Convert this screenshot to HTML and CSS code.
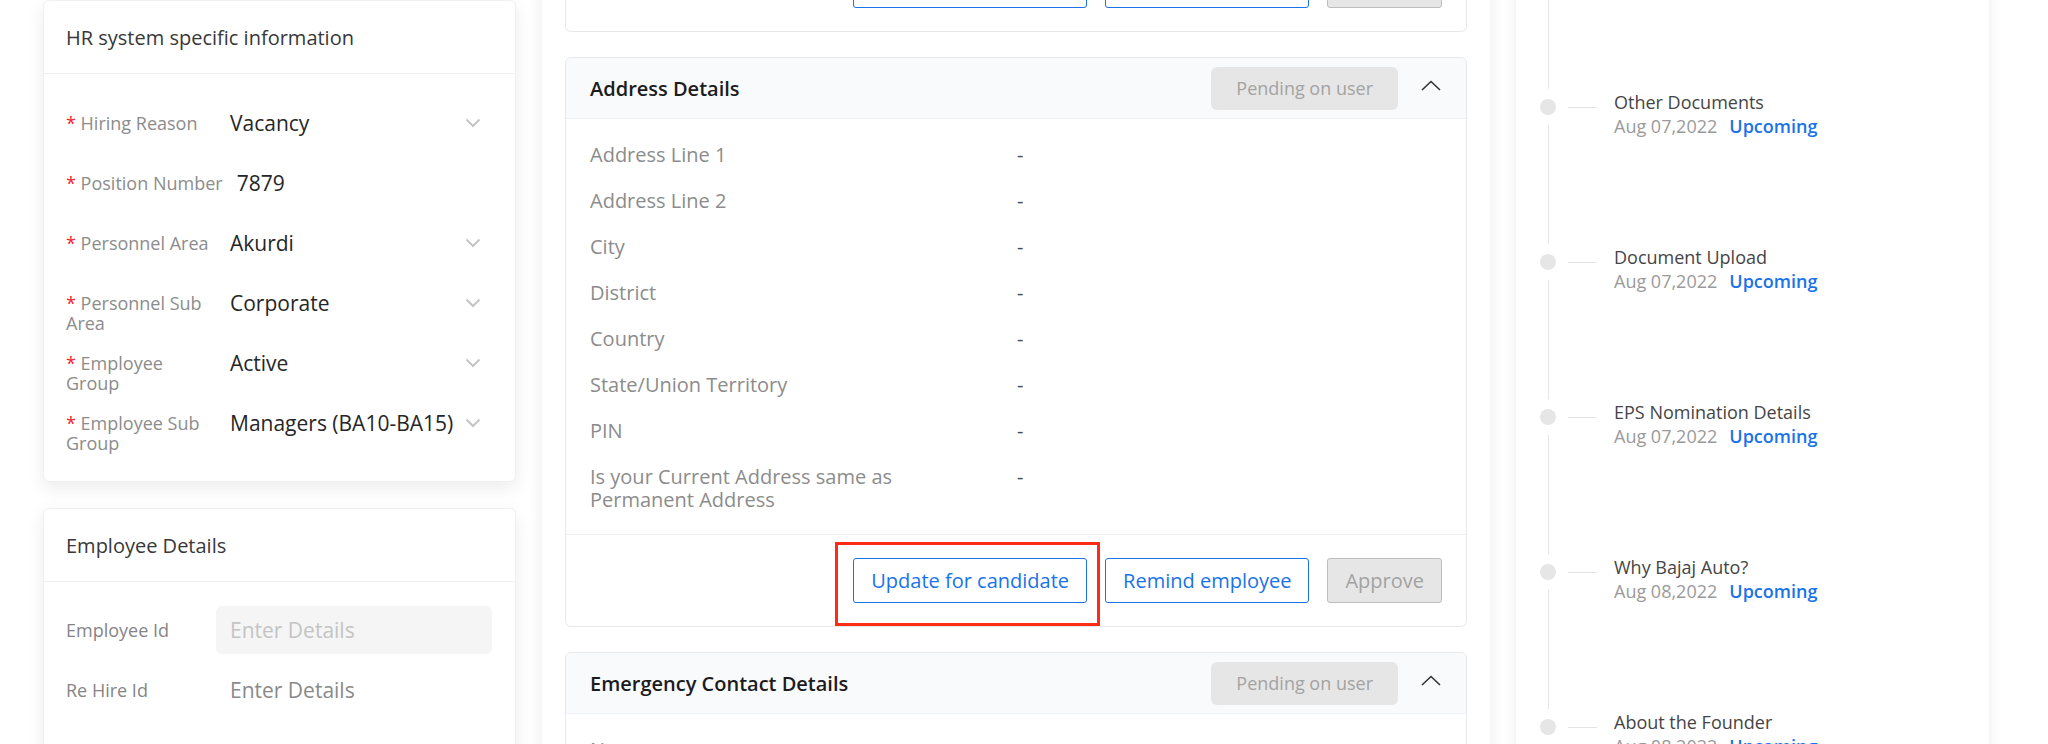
FILE: index.html
```html
<!DOCTYPE html>
<html lang="en">
<head>
<meta charset="utf-8">
<title>Onboarding</title>
<link rel="stylesheet" href="styles.css">
</head>
<body>
<div class="left-col">
  <section class="card">
    <header class="card-head">HR system specific information</header>
    <div class="form">
      <div class="frow">
        <div class="flabel"><span class="req">*</span> Hiring Reason</div>
        <div class="select"><span>Vacancy</span><svg class="chev" width="16" height="10" viewBox="0 0 16 10"><polyline points="1.5,1.5 8,8 14.5,1.5" fill="none" stroke="#c4c4c4" stroke-width="2"/></svg></div>
      </div>
      <div class="frow">
        <div class="flabel wide"><span class="req">*</span> Position Number</div>
        <div class="select"><span>7879</span></div>
      </div>
      <div class="frow">
        <div class="flabel"><span class="req">*</span> Personnel Area</div>
        <div class="select"><span>Akurdi</span><svg class="chev" width="16" height="10" viewBox="0 0 16 10"><polyline points="1.5,1.5 8,8 14.5,1.5" fill="none" stroke="#c4c4c4" stroke-width="2"/></svg></div>
      </div>
      <div class="frow">
        <div class="flabel"><span class="req">*</span> Personnel Sub Area</div>
        <div class="select"><span>Corporate</span><svg class="chev" width="16" height="10" viewBox="0 0 16 10"><polyline points="1.5,1.5 8,8 14.5,1.5" fill="none" stroke="#c4c4c4" stroke-width="2"/></svg></div>
      </div>
      <div class="frow">
        <div class="flabel"><span class="req">*</span> Employee Group</div>
        <div class="select"><span>Active</span><svg class="chev" width="16" height="10" viewBox="0 0 16 10"><polyline points="1.5,1.5 8,8 14.5,1.5" fill="none" stroke="#c4c4c4" stroke-width="2"/></svg></div>
      </div>
      <div class="frow">
        <div class="flabel"><span class="req">*</span> Employee Sub Group</div>
        <div class="select"><span>Managers (BA10-BA15)</span><svg class="chev" width="16" height="10" viewBox="0 0 16 10"><polyline points="1.5,1.5 8,8 14.5,1.5" fill="none" stroke="#c4c4c4" stroke-width="2"/></svg></div>
      </div>
    </div>
  </section>
  <section class="card">
    <header class="card-head">Employee Details</header>
    <div class="eform">
      <div class="erow">
        <div class="elabel">Employee Id</div>
        <div class="einput disabled">Enter Details</div>
      </div>
      <div class="erow">
        <div class="elabel">Re Hire Id</div>
        <div class="einput">Enter Details</div>
      </div>
    </div>
  </section>
</div>

<main class="mid">
  <section class="dcard">
    <div class="dfoot first">
      <button class="btn">Update for candidate</button>
      <button class="btn">Remind employee</button>
      <button class="btn btn-gray">Approve</button>
    </div>
  </section>

  <section class="dcard">
    <div class="dhead">
      <h2 class="dtitle">Address Details</h2>
      <span class="badge">Pending on user</span>
      <svg class="up" width="20" height="11" viewBox="0 0 20 11"><polyline points="1,10 10,1.5 19,10" fill="none" stroke="#333" stroke-width="1.6"/></svg>
    </div>
    <div class="dbody">
      <div class="dl">Address Line 1</div><div class="dv">-</div>
      <div class="dl">Address Line 2</div><div class="dv">-</div>
      <div class="dl">City</div><div class="dv">-</div>
      <div class="dl">District</div><div class="dv">-</div>
      <div class="dl">Country</div><div class="dv">-</div>
      <div class="dl">State/Union Territory</div><div class="dv">-</div>
      <div class="dl">PIN</div><div class="dv">-</div>
      <div class="dl narrow">Is your Current Address same as Permanent Address</div><div class="dv">-</div>
    </div>
    <div class="dfoot">
      <span class="hl-wrap"><button class="btn">Update for candidate</button><span class="hl"></span></span>
      <button class="btn">Remind employee</button>
      <button class="btn btn-gray">Approve</button>
    </div>
  </section>

  <section class="dcard">
    <div class="dhead">
      <h2 class="dtitle">Emergency Contact Details</h2>
      <span class="badge">Pending on user</span>
      <svg class="up" width="20" height="11" viewBox="0 0 20 11"><polyline points="1,10 10,1.5 19,10" fill="none" stroke="#333" stroke-width="1.6"/></svg>
    </div>
    <div class="dbody">
      <div class="dl">Name</div><div class="dv">-</div>
      <div class="dl">Relationship</div><div class="dv">-</div>
    </div>
  </section>
</main>

<aside class="right">
  <div class="tl">
    <div class="tl-lead"><span class="tl-line"></span></div>
    <div class="tl-item">
      <div class="rail"><span class="dot"></span><span class="tl-line"></span></div>
      <span class="conn"></span>
      <div class="tl-text"><div class="tl-title">Other Documents</div><div class="tl-date">Aug 07,2022<span class="up-tag">Upcoming</span></div></div>
    </div>
    <div class="tl-item">
      <div class="rail"><span class="dot"></span><span class="tl-line"></span></div>
      <span class="conn"></span>
      <div class="tl-text"><div class="tl-title">Document Upload</div><div class="tl-date">Aug 07,2022<span class="up-tag">Upcoming</span></div></div>
    </div>
    <div class="tl-item">
      <div class="rail"><span class="dot"></span><span class="tl-line"></span></div>
      <span class="conn"></span>
      <div class="tl-text"><div class="tl-title">EPS Nomination Details</div><div class="tl-date">Aug 07,2022<span class="up-tag">Upcoming</span></div></div>
    </div>
    <div class="tl-item">
      <div class="rail"><span class="dot"></span><span class="tl-line"></span></div>
      <span class="conn"></span>
      <div class="tl-text"><div class="tl-title">Why Bajaj Auto?</div><div class="tl-date">Aug 08,2022<span class="up-tag">Upcoming</span></div></div>
    </div>
    <div class="tl-item">
      <div class="rail"><span class="dot"></span><span class="tl-line"></span></div>
      <span class="conn"></span>
      <div class="tl-text"><div class="tl-title">About the Founder</div><div class="tl-date">Aug 08,2022<span class="up-tag">Upcoming</span></div></div>
    </div>
  </div>
</aside>
</body>
</html>
```

FILE: styles.css
```css
* { box-sizing: border-box; }

html, body {
  margin: 0;
  height: 744px;
  overflow: hidden;
}

body {
  background: #ffffff;
  font-family: "Open Sans", "Liberation Sans", sans-serif;
  display: flex;
  align-items: flex-start;
  gap: 26px;
  padding-left: 43px;
  color: #333;
}

/* ---------- left column ---------- */
.left-col {
  flex: 0 0 473px;
  width: 473px;
  display: flex;
  flex-direction: column;
  gap: 26px;
}

.card {
  background: #fff;
  border: 1px solid #eef0f4;
  border-radius: 6px;
  box-shadow: 0 6px 18px rgba(0, 0, 0, 0.08);
}

.card-head {
  height: 73px;
  display: flex;
  align-items: center;
  padding: 0 22px;
  border-bottom: 1px solid #edf0f5;
  font-size: 20px;
  color: #383838;
}

.form {
  padding: 39px 23px 28px 22px;
  display: flex;
  flex-direction: column;
  gap: 20px;
}

.frow {
  display: flex;
  align-items: flex-start;
  height: 40px;
}

.flabel {
  flex: 0 0 150px;
  width: 150px;
  font-size: 18px;
  line-height: 20px;
  color: #8c8c8c;
}

.flabel.wide {
  flex: 0 0 auto;
  width: auto;
  white-space: nowrap;
}

.req {
  color: #f5222d;
}

.select {
  flex: 1;
  display: flex;
  align-items: center;
  justify-content: space-between;
  height: 20px;
  padding: 0 11px 0 14px;
  font-size: 21px;
  color: #262626;
  white-space: nowrap;
}

.chev { flex: 0 0 auto; }

.eform {
  padding: 24px 23px 70px 22px;
  display: flex;
  flex-direction: column;
  gap: 12px;
}

.erow {
  display: flex;
  align-items: center;
}

.elabel {
  flex: 0 0 150px;
  font-size: 18px;
  color: #858585;
}

.einput {
  flex: 1;
  height: 48px;
  display: flex;
  align-items: center;
  padding-left: 14px;
  border-radius: 6px;
  font-size: 21px;
  color: #8a8a8a;
}

.einput.disabled {
  background: #f5f5f5;
  color: #c4c4c4;
}

/* ---------- middle column ---------- */
.mid {
  flex: 0 0 948px;
  width: 948px;
  margin-top: -85px;
  padding: 24px 23px;
  background: #fff;
  box-shadow: 0 0 14px rgba(30, 40, 80, 0.09);
  display: flex;
  flex-direction: column;
  gap: 25px;
  min-height: 1000px;
}

.dcard {
  background: #fff;
  border: 1px solid #e6e8ee;
  border-radius: 6px;
}

.dhead {
  height: 61px;
  display: flex;
  align-items: center;
  padding: 0 25px 0 24px;
  background: #f9fafc;
  border-bottom: 1px solid #edf0f5;
  border-radius: 6px 6px 0 0;
}

.dtitle {
  margin: 0;
  flex: 1;
  font-size: 20px;
  font-weight: 600;
  color: #1c1c1c;
}

.badge {
  height: 43px;
  display: flex;
  align-items: center;
  padding: 0 25px;
  border-radius: 6px;
  background: #e6e6e6;
  color: #a3a3a3;
  font-size: 18px;
}

.up {
  margin-left: 23px;
  margin-top: -6px;
}

.dbody {
  display: grid;
  grid-template-columns: 427px 1fr;
  row-gap: 23px;
  padding: 24px 24px 23px;
  font-size: 20px;
  line-height: 23px;
}

.dl { color: #8c8c8c; }
.dl.narrow { max-width: 335px; }
.dv { color: #4a4a4a; }

.dfoot {
  display: flex;
  justify-content: flex-end;
  gap: 18px;
  padding: 23px 24px;
  border-top: 1px solid #edf0f5;
}

.dfoot.first { border-top: none; }

.btn {
  height: 45px;
  padding: 0 17px;
  font-family: inherit;
  font-size: 20px;
  border-radius: 3px;
  background: #fff;
  border: 1.5px solid #1a73e8;
  color: #1a73e8;
}

.btn-gray {
  background: #e6e6e6;
  border-color: #bdbdbd;
  color: #a3a3a3;
}

.hl-wrap {
  position: relative;
  display: flex;
}

.hl {
  position: absolute;
  top: -16px;
  left: -18px;
  right: -13px;
  bottom: -23px;
  border: 3px solid #ff2b14;
  pointer-events: none;
}

/* ---------- right column ---------- */
.right {
  flex: 0 0 473px;
  width: 473px;
  margin-top: -85px;
  padding-top: 85px;
  height: 1100px;
  background: #fff;
  box-shadow: 0 0 14px rgba(30, 40, 80, 0.09);
}

.tl {
  padding-left: 24px;
}

.tl-lead {
  width: 16px;
  height: 89px;
  display: flex;
  justify-content: center;
}

.tl-line {
  display: block;
  width: 1px;
  background: #e6e6e6;
}

.tl-lead .tl-line { height: 100%; }

.tl-item {
  height: 155px;
  display: flex;
  align-items: flex-start;
}

.rail {
  flex: 0 0 16px;
  height: 100%;
  display: flex;
  flex-direction: column;
  align-items: center;
  padding-top: 10px;
}

.dot {
  width: 16px;
  height: 16px;
  border-radius: 50%;
  background: #e6e6e6;
  flex: 0 0 16px;
}

.rail .tl-line {
  flex: 1;
  margin-top: 10px;
}

.conn {
  flex: 0 0 29px;
  height: 1px;
  margin: 18px 0 0 12px;
  background: #e4e4e4;
}

.tl-text {
  margin-left: 17px;
  padding-top: 1px;
  font-size: 18px;
  line-height: 24px;
}

.tl-title {
  font-weight: 500;
  color: #454545;
}

.tl-date {
  color: #9a9a9a;
}

.up-tag {
  margin-left: 12px;
  font-weight: 600;
  color: #1a73e8;
}
```
